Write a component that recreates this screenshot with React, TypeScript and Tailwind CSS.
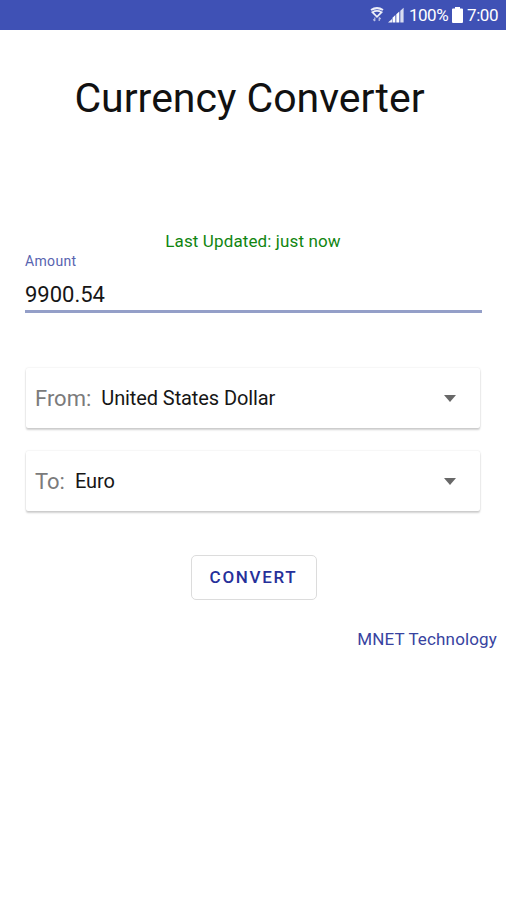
import React, { useState } from 'react';

type Currency = { code: string; name: string };

const currencies: Currency[] = [
  { code: 'USD', name: 'United States Dollar' },
  { code: 'EUR', name: 'Euro' },
];

function StatusBar() {
  return (
    <div className="flex h-[30px] items-center justify-end bg-[#3f51b5] pr-[7px] text-white">
      <svg className="mr-[4px] h-4 w-[14px]" viewBox="0 0 14 16" fill="none" stroke="#fff">
        <path d="M1 3C4.5 0.8 9.5 0.8 13 3" strokeWidth="2" opacity="0.9" />
        <path d="M2.4 5.2C5 3.8 9 3.8 11.6 5.2L7 9.8Z" strokeWidth="1.7" opacity="0.9" />
        <path d="M4.8 10.5V14M3.3 12.3L4.8 14M9.2 14V10.5M10.7 12.2L9.2 10.5" strokeWidth="1.2" opacity="0.65" />
      </svg>
      <svg className="mr-[5px] h-4 w-4" viewBox="0 0 16 16" fill="#fff">
        <path d="M0 15.5L4 12V15.5Z" opacity="0.9" />
        <path d="M4.5 10.8L7.4 8V15.5H4.5Z" />
        <path d="M8.3 7.2L11.3 4.5V15.5H8.3Z" />
        <path d="M12.3 3.8L15.6 0.8V15.5H12.3Z" opacity="0.8" />
      </svg>
      <span className="w-[39px] whitespace-nowrap text-[17px] leading-none tracking-[-0.5px]">100%</span>
      <svg className="mx-1 h-4 w-[11px]" viewBox="0 0 11 16" fill="#fff">
        <path d="M3 0H8V1.5H10Q11 1.5 11 2.5V15Q11 16 10 16H1Q0 16 0 15V2.5Q0 1.5 1 1.5H3Z" />
      </svg>
      <span className="w-8 whitespace-nowrap text-[17px] leading-none tracking-[-0.4px]">7:00</span>
    </div>
  );
}

function CurrencySelect({ label, currency }: { label: string; currency: Currency }) {
  return (
    <button className="flex h-[60px] w-full items-center rounded-[2px] bg-white pl-[9px] pr-6 text-left shadow-[0_2px_2px_rgba(0,0,0,0.18),0_0_2px_rgba(0,0,0,0.13)]">
      <span className="text-[22px] text-[#7b7b7b]">{label}</span>
      <span className="ml-[10px] flex-1 text-[20px] tracking-[-0.1px] text-[#161616]">{currency.name}</span>
      <svg className="h-[7px] w-3" viewBox="0 0 12 7" fill="#686868">
        <path d="M0 0H12L6 7Z" />
      </svg>
    </button>
  );
}

export default function App() {
  const [amount, setAmount] = useState('9900.54');

  return (
    <div className="flex h-[900px] w-[506px] flex-col overflow-hidden bg-white font-['Roboto',sans-serif]">
      <StatusBar />

      <h1 className="mt-[44px] pr-[7px] text-center text-[41px] leading-[48px] text-[#111]">Currency Converter</h1>

      <main className="flex flex-col px-[25px]">
        <p className="mt-[109px] text-center text-[17px] leading-5 tracking-[0.12px] text-[#108510]">
          Last Updated: just now
        </p>

        <label className="flex flex-col">
          <span className="text-[14px] leading-5 tracking-[0.35px] text-[#5864b0]">Amount</span>
          <input
            value={amount}
            onChange={(e) => setAmount(e.target.value)}
            inputMode="decimal"
            className="mr-[-1px] h-[42px] border-b-[3px] border-[#949fc8] pt-[7px] text-[22px] text-[#161616] outline-none"
          />
        </label>

        <div className="mt-[55px] flex flex-col gap-[23px] pl-[1px] pr-[1px]">
          <CurrencySelect label="From:" currency={currencies[0]} />
          <CurrencySelect label="To:" currency={currencies[1]} />
        </div>

        <button className="ml-[1px] mt-[44px] h-[45px] w-[126px] self-center rounded-[5px] border border-[#dcdcdc] pt-[1px] text-[17px] font-medium tracking-[1.7px] text-[#26309a]">
          CONVERT
        </button>
      </main>

      <footer className="mt-[28px] pr-[9px] text-right text-[17px] leading-[22px] tracking-[0.15px] text-[#3843a0]">
        MNET Technology
      </footer>
    </div>
  );
}
